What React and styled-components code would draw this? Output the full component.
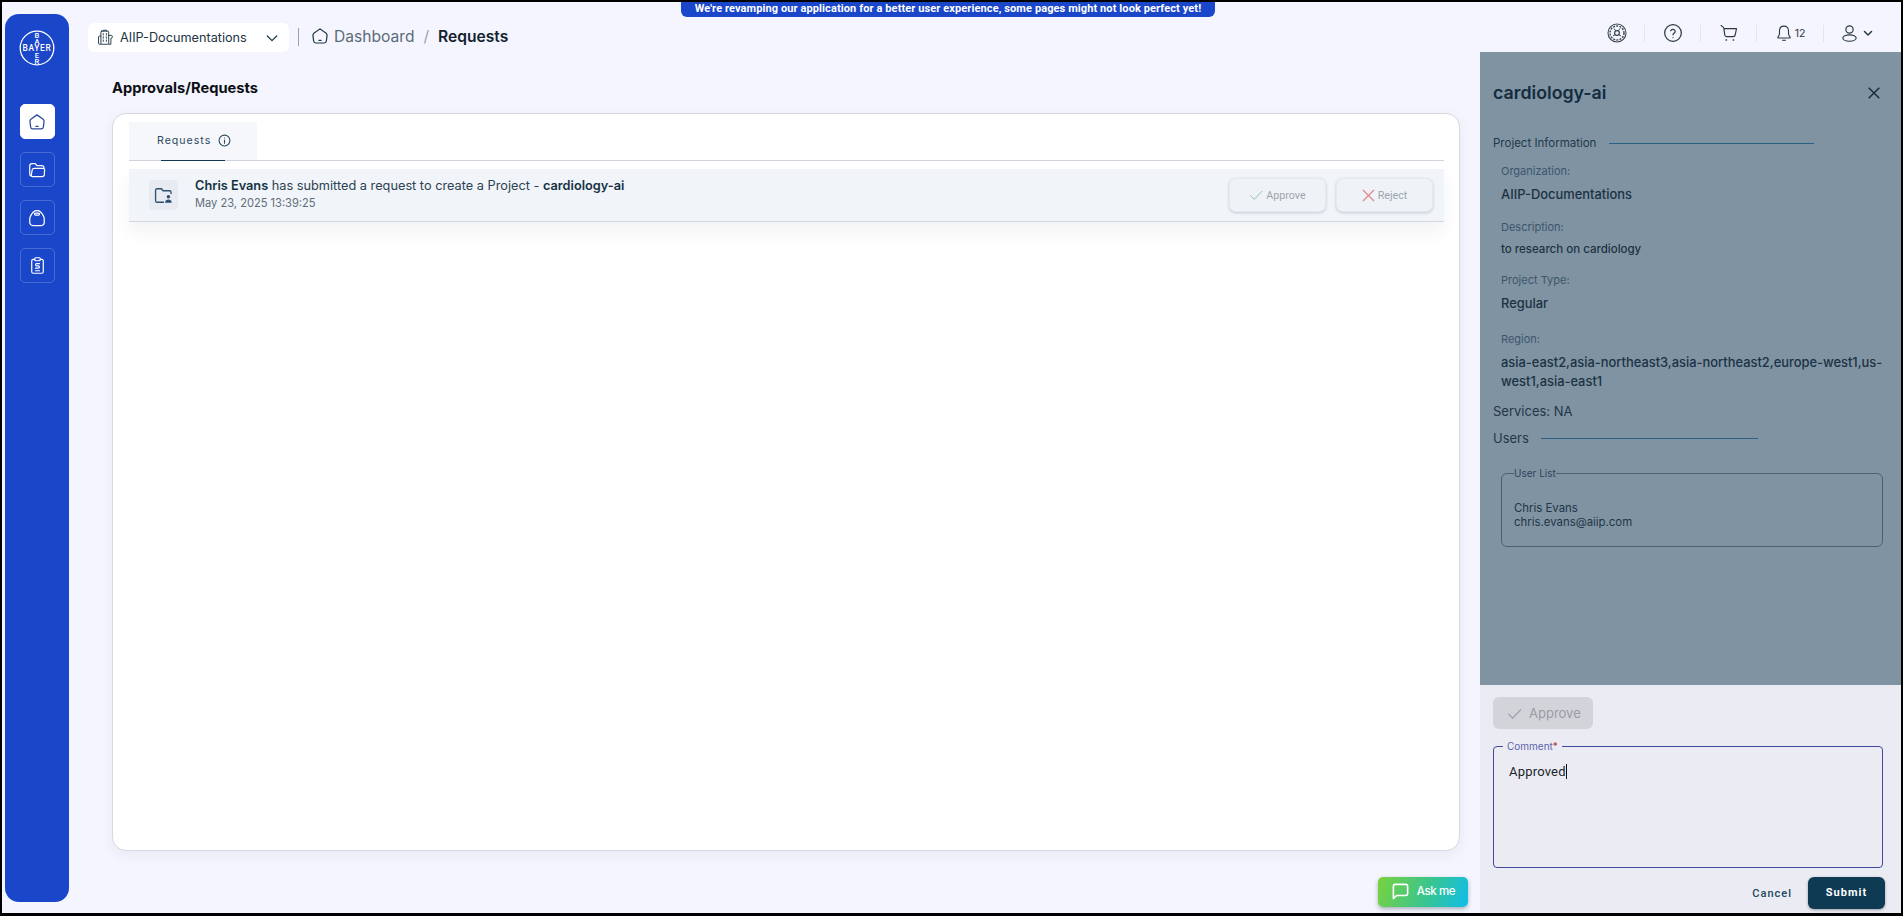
import React from "react";
import styled, { createGlobalStyle } from "styled-components";

const Global = createGlobalStyle`
  html, body { margin: 0; padding: 0; height: 100%; background: #000; overflow: hidden; }
  #root { height: 100%; }
  * { box-sizing: border-box; }
`;

const Frame = styled.div`
  position: relative;
  width: 1903px;
  height: 916px;
  border-style: solid;
  border-color: #000;
  border-width: 2px 2px 3px 2px;
  background: #f4f5fe;
  display: flex;
  font-family: Inter, "Liberation Sans", sans-serif;
  color: #10384f;
  overflow: hidden;
`;

const Banner = styled.div`
  position: absolute;
  top: 0;
  left: 679px;
  width: 534px;
  height: 15px;
  background: #1a46c9;
  border-radius: 0 0 6px 6px;
  color: #fff;
  font: 700 11px/13px Roboto, sans-serif;
  letter-spacing: 0.1px;
  text-align: center;
`;

const Sidebar = styled.aside`
  flex: none;
  width: 64px;
  margin: 12px 0 11px 3px;
  padding-top: 16px;
  background: #1a46c9;
  border-radius: 14px;
  display: flex;
  flex-direction: column;
  align-items: center;
`;

const Nav = styled.nav`
  margin-top: 38px;
  display: flex;
  flex-direction: column;
  gap: 13px;
`;

const NavButton = styled.div`
  width: 35px;
  height: 35px;
  border-radius: 5px;
  display: flex;
  align-items: center;
  justify-content: center;
  background: ${(p) => (p.$active ? "#fff" : "transparent")};
  border: 1px solid ${(p) => (p.$active ? "#fff" : "rgba(255,255,255,.2)")};
  color: ${(p) => (p.$active ? "#2c4a9a" : "#fff")};
`;

const Column = styled.div`
  flex: 1;
  min-width: 0;
  display: flex;
  flex-direction: column;
`;

const Header = styled.header`
  flex: none;
  height: 50px;
  display: flex;
  align-items: flex-start;
  padding-left: 19px;
`;

const OrgSelect = styled.div`
  width: 201px;
  height: 29px;
  margin-top: 21px;
  padding: 0 9px;
  background: #fff;
  border-radius: 6px;
  display: flex;
  align-items: center;
  font-size: 12.7px;
  color: #1d3444;
  gap: 6px;
  span { flex: 1; white-space: nowrap; }
`;

const VDivider = styled.div`
  width: 1px;
  height: 18px;
  margin: 26px 12px 0 9px;
  background: #9aa3ad;
`;

const Crumbs = styled.div`
  display: flex;
  align-items: center;
  height: 24px;
  margin-top: 22px;
  font-size: 15.6px;
  color: #5d6b77;
  svg { color: #1d3444; margin-right: 5px; }
`;

const CrumbSep = styled.span`
  margin: 0 9px;
  color: #9aa3ad;
`;

const CrumbNow = styled.span`
  color: #14232f;
  font-weight: 600;
`;

const Tools = styled.div`
  margin: 21px 0 0 auto;
  display: flex;
  align-items: center;
  height: 20px;
  padding-right: 19px;
  color: #2b3942;
`;

const Tool = styled.div`
  width: ${(p) => p.$w}px;
  padding-left: ${(p) => p.$pl || 0}px;
  display: flex;
  align-items: center;
  justify-content: center;
  gap: ${(p) => p.$gap || 2}px;
  font-size: 10.5px;
`;

const ToolBar = styled.div`
  width: 1px;
  height: 17px;
  background: #e3e5ee;
`;

const Body = styled.div`
  flex: 1;
  min-height: 0;
  display: flex;
`;

const Main = styled.main`
  position: relative;
  flex: 1;
  min-width: 0;
  padding: 26px 20px 0 43px;
`;

const PageTitle = styled.h1`
  margin: 0 0 15px;
  font-size: 14.7px;
  line-height: 20px;
  font-weight: 700;
  color: #0b0f14;
`;

const Card = styled.section`
  height: 738px;
  padding: 8px 15px 0 16px;
  background: #fff;
  border: 1px solid #d6d9e2;
  border-radius: 14px;
  box-shadow: 0 4px 14px rgba(40, 50, 90, 0.06);
`;

const TabBar = styled.div`
  height: 39px;
  border-bottom: 1px solid #cfd3dc;
`;

const Tab = styled.div`
  position: relative;
  width: 128px;
  height: 38px;
  background: #f5f7fb;
  display: flex;
  align-items: center;
  padding: 0 0 2px 28px;
  gap: 7px;
  font-size: 10.6px;
  letter-spacing: 1px;
  color: #2d4a5e;
  &::after {
    content: "";
    position: absolute;
    left: 32px;
    width: 64px;
    bottom: -1px;
    height: 1.5px;
    background: #10384f;
  }
`;

const Row = styled.div`
  height: 53px;
  margin-top: 8px;
  padding: 0 11px 0 20px;
  display: flex;
  align-items: center;
  background: #f1f4f8;
  border-bottom: 1px solid #d3d7df;
  box-shadow: 0 10px 16px rgba(40, 50, 70, 0.06);
`;

const RowIcon = styled.div`
  width: 29px;
  height: 30px;
  margin-right: 17px;
  border-radius: 4px;
  background: #e8ecf2;
  display: flex;
  align-items: center;
  justify-content: center;
  color: #2d5070;
`;

const RowText = styled.div`
  flex: 1;
  padding-bottom: 2px;
  font-size: 12.75px;
  line-height: 18px;
  color: #2c4353;
  b { font-weight: 600; color: #163346; }
`;

const RowDate = styled.div`
  font-size: 11.1px;
  line-height: 16px;
  color: #5f6d78;
`;

const RowButton = styled.div`
  width: 97px;
  height: 34px;
  margin-left: 10px;
  border-radius: 7px;
  background: #eff2f6;
  border: 1px solid #e6e9ee;
  box-shadow: 0 1px 3px rgba(30, 40, 60, 0.2);
  display: flex;
  align-items: center;
  justify-content: center;
  gap: 3px;
  font: 400 10.7px Roboto, sans-serif;
  color: #9ca6af;
`;

const AskMe = styled.div`
  position: absolute;
  right: 12px;
  bottom: 6px;
  width: 90px;
  height: 30px;
  border-radius: 5px;
  background: linear-gradient(110deg, #7ad23c 0%, #38c590 55%, #10bdea 100%);
  box-shadow: 0 2px 4px rgba(30, 50, 60, 0.35);
  display: flex;
  align-items: center;
  justify-content: center;
  gap: 7px;
  padding-bottom: 2px;
  color: #fff;
  font-size: 11.5px;
  letter-spacing: -0.4px;
  font-weight: 500;
`;

const Panel = styled.aside`
  flex: none;
  width: 421px;
  display: flex;
  flex-direction: column;
`;

const PanelTop = styled.div`
  flex: none;
  height: 633px;
  padding: 29px 12px 0 13px;
  background: #8093a2;
  color: #1b3244;
`;

const PanelHead = styled.div`
  display: flex;
  align-items: center;
  justify-content: space-between;
  padding-right: 9px;
`;

const PanelTitle = styled.h2`
  margin: 0;
  font-size: 17.8px;
  line-height: 24px;
  font-weight: 600;
  color: #132c3e;
`;

const Section = styled.div`
  display: flex;
  align-items: center;
  margin-top: ${(p) => p.$mt}px;
  font-size: ${(p) => p.$size}px;
  line-height: ${(p) => p.$lh}px;
  color: #21394b;
`;

const SectionLine = styled.div`
  width: ${(p) => p.$w}px;
  margin-left: ${(p) => p.$gap}px;
  height: 1px;
  background: #2c5f84;
`;

const Details = styled.div`
  padding-left: 8px;
`;

const Label = styled.div`
  margin-top: ${(p) => p.$mt}px;
  font-size: 11px;
  line-height: 16px;
  color: #3b566c;
`;

const Value = styled.div`
  margin-top: ${(p) => p.$mt || 6}px;
  font-size: ${(p) => p.$size || 12.9}px;
  line-height: ${(p) => p.$lh || 18}px;
  font-weight: 500;
  color: #1b3244;
`;

const Plain = styled.div`
  margin-top: ${(p) => p.$mt}px;
  font-size: 13px;
  line-height: 18px;
  color: #1f3648;
`;

const UserBox = styled.fieldset`
  margin: 20px 0 0 8px;
  width: 382px;
  height: 80px;
  padding: 22px 12px 0;
  border: 1px solid #4a6275;
  border-radius: 6px;
  font-size: 11.4px;
  line-height: 14px;
  color: #1f3648;
  legend {
    padding: 0;
    font-size: 10px;
    line-height: 12px;
    color: #2d465a;
  }
`;

const PanelBottom = styled.div`
  flex: 1;
  padding: 12px 12px 0 13px;
  background: #ebecf3;
`;

const ApproveChip = styled.div`
  width: 100px;
  height: 32px;
  border-radius: 6px;
  background: #d2d4da;
  display: flex;
  align-items: center;
  padding-left: 14px;
  gap: 7px;
  color: #989ca3;
  font-size: 13px;
`;

const CommentBox = styled.fieldset`
  margin: 11px 0 0;
  width: 390px;
  height: 128px;
  padding: 11px 15px 0;
  border: 1px solid #3f4a9c;
  border-radius: 4px;
  font-family: Roboto, sans-serif;
  font-size: 13px;
  letter-spacing: 0.2px;
  line-height: 18px;
  color: #20232a;
  legend {
    margin-left: -6px;
    padding: 0 4px;
    font: 400 10px/12px Inter, sans-serif;
    letter-spacing: 0;
    color: #5c63ad;
    i { font-style: normal; color: #b0323a; }
  }
`;

const Caret = styled.span`
  display: inline-block;
  width: 1px;
  height: 15px;
  background: #111;
  vertical-align: -3px;
`;

const Actions = styled.div`
  margin-top: 9px;
  width: 392px;
  display: flex;
  align-items: center;
  justify-content: flex-end;
`;

const CancelBtn = styled.div`
  margin-right: 16px;
  font: 500 11px Roboto, sans-serif;
  letter-spacing: 1px;
  color: #21465e;
`;

const SubmitBtn = styled.div`
  width: 77px;
  height: 32px;
  border-radius: 6px;
  background: #0f3a54;
  box-shadow: 0 1px 3px rgba(0, 0, 0, 0.35);
  color: #fff;
  font: 700 11px/32px Roboto, sans-serif;
  letter-spacing: 1px;
  text-align: center;
`;

const Ico = ({ s = 16, w = 1.4, children, vb = 24 }) => (
  <svg width={s} height={s} viewBox={`0 0 ${vb} ${vb}`} fill="none" stroke="currentColor" strokeWidth={w} strokeLinecap="round" strokeLinejoin="round">
    {children}
  </svg>
);

const HomeIcon = ({ s = 18, w = 1.7 }) => (
  <Ico s={s} w={w}>
    <path d="M12 2.5 20.2 8.4c.9.7 1.3 1.6 1.2 2.7l-.9 7.6c-.2 1.6-1.3 2.6-2.9 2.6H6.4c-1.6 0-2.7-1-2.9-2.6l-.9-7.6c-.1-1.1.3-2 1.2-2.7Z" />
    <path d="M10.5 17.8h3" />
  </Ico>
);

const Logo = () => (
  <svg width="36" height="36" viewBox="0 0 36 36" fill="none">
    <circle cx="18" cy="18" r="16.8" stroke="#fff" strokeWidth="1.3" />
    <g fill="#fff" fontFamily="Roboto, sans-serif" textAnchor="middle" fontWeight="500">
      <text x="18" y="21" fontSize="8.4" letterSpacing=".7">BAYER</text>
      <g fontSize="7.6">
        <text x="18" y="8">B</text>
        <text x="18" y="13.7">A</text>
        <text x="18" y="27.8">E</text>
        <text x="18" y="33.6">R</text>
      </g>
    </g>
  </svg>
);

const FolderIcon = () => (
  <Ico s={18} w={1.6}>
    <path d="M4.2 20.2c-1.1-.4-1.9-1.5-1.9-2.8V6.6c0-1.8 1.3-3 3-3h3.4c1 0 1.7.4 2.2 1.2l.9 1.4h6.6c1.7 0 2.8 1 2.8 2.7" />
    <path d="M6.4 20.8c-1.4 0-2.3-.9-2-2.2l1.2-6.7c.3-1.4 1.3-2.2 2.6-2.2h11.9c1.3 0 2.1 1 2 2.2l-.3 6.2c-.1 1.6-1.2 2.7-2.8 2.7Z" />
  </Ico>
);

const BagIcon = () => (
  <Ico s={20} w={1.5}>
    <path d="M8 4.5C9 3.4 10.4 3 12 3s3 .4 4 1.5c2.5 2.5 4.7 5.7 4.7 9v3.7c0 2.3-1.6 3.8-3.8 3.8H7.1c-2.2 0-3.8-1.5-3.8-3.8v-3.7c0-3.3 2.2-6.5 4.7-9Z" />
    <rect x="9" y="6" width="6" height="2.6" rx="1.3" />
  </Ico>
);

const ClipIcon = () => (
  <Ico s={19} w={1.5}>
    <path d="M8.5 4.2H6.6c-1.1 0-1.9.8-1.9 1.9v13.8c0 1.1.8 1.9 1.9 1.9h10.8c1.1 0 1.9-.8 1.9-1.9V6.1c0-1.1-.8-1.9-1.9-1.9h-1.9" />
    <rect x="8.5" y="2.2" width="7" height="3.8" rx="1.2" />
    <path d="M14.6 9.6H11c-.9 0-1.5.6-1.5 1.4s.6 1.4 1.5 1.4h2c.9 0 1.5.6 1.5 1.5s-.6 1.5-1.5 1.5H9.4" />
    <path d="M9.4 18.6h5.2" />
  </Ico>
);

const BuildingIcon = () => (
  <Ico s={17} w={1.3}>
    <rect x="5.5" y="3" width="11" height="18.5" rx="1" />
    <path d="M8.5 3V1.8h5V3M8.8 6.5v2M8.8 11v2M8.8 15.5v2M13.2 6.5v2M13.2 11v2M13.2 15.5v2" />
    <path d="M5.5 10H3.4c-.8 0-1.2.5-1.2 1.2v9c0 .8.4 1.3 1.2 1.3h2.1M16.5 9h3.8c.8 0 1.3.5 1.3 1.3v1.2c0 1-.6 1.6-1.6 1.6h-.4v8.4h-3.1" />
  </Ico>
);

const Chevron = ({ s = 16, w = 1.8 }) => (
  <Ico s={s} w={w}><path d="m5 9 7 7 7-7" /></Ico>
);

const TargetIcon = () => (
  <svg width="20" height="20" viewBox="0 0 20 20" fill="none" stroke="#3c4650">
    <circle cx="10" cy="10" r="9" strokeWidth="1.1" />
    <circle cx="10" cy="10" r="7" strokeWidth="1.4" strokeDasharray="2 1.2" />
    <circle cx="10" cy="10" r="2.4" strokeWidth="1.2" />
    <path d="M7 5.5 9 8M13 5.5 11 8M6 13l2.4-1.5M14 13l-2.4-1.5" strokeWidth="1" />
  </svg>
);

const HelpIcon = () => (
  <Ico s={20} w={1.5}>
    <circle cx="12" cy="12" r="10" />
    <path d="M9.3 9.3a2.8 2.8 0 0 1 5.4.9c0 1.8-2.7 2.4-2.7 4" />
    <path d="M12 17.4h.01" />
  </Ico>
);

const CartIcon = () => (
  <Ico s={20} w={1.4}>
    <path d="M2.5 3 5 5c.6.5.9 1.1.9 1.8H21l-1.6 7.6c-.3 1.2-1.1 1.9-2.3 1.9H9.2c-1.2 0-2.1-.8-2.3-2L5.9 6.8" />
    <path d="M8.5 20.5h.5M17 20.5h.5" strokeWidth="1.8" />
  </Ico>
);

const BellIcon = () => (
  <Ico s={18} w={1.5}>
    <path d="M12 2.8c-3.6 0-6 2.6-6 6.2v3.6c0 1.6-.7 3-1.9 4.5-.6.8-.2 1.6.8 1.6h14.2c1 0 1.4-.8.8-1.6-1.2-1.5-1.9-2.9-1.9-4.5V9c0-3.6-2.4-6.2-6-6.2Z" />
    <path d="M10 21.6h4" />
  </Ico>
);

const UserIcon = () => (
  <Ico s={19} w={1.5}>
    <circle cx="12" cy="7" r="4.6" />
    <ellipse cx="12" cy="17.8" rx="8.4" ry="4" />
  </Ico>
);

const InfoIcon = () => (
  <Ico s={13} w={2}>
    <circle cx="12" cy="12" r="10" />
    <path d="M12 11v6M12 7.4h.01" />
  </Ico>
);

const ProjectFolderIcon = () => (
  <Ico s={19} w={1.7}>
    <path d="M21.5 9.5V8c0-1.2-.8-2-2-2h-8l-2-2.5H4c-1.2 0-2 .8-2 2v13c0 1.2.8 2 2 2h8" />
    <circle cx="18.2" cy="13.6" r="2.2" fill="currentColor" stroke="none" />
    <path d="M14 21c.2-2.6 1.8-4 4.2-4s4 1.4 4.2 4Z" fill="currentColor" stroke="none" />
  </Ico>
);

const CheckIcon = ({ s, color }) => (
  <svg width={s} height={s} viewBox="0 0 16 16" fill="none" stroke={color} strokeWidth="1.1">
    <path d="M1.5 8.5 6 13 15 3.5" />
  </svg>
);

const CrossIcon = () => (
  <svg width="13" height="13" viewBox="0 0 13 13" fill="none" stroke="#e0878c" strokeWidth="1.2">
    <path d="M1 1l11 11M12 1 1 12" />
  </svg>
);

const CloseIcon = () => (
  <svg width="12" height="12" viewBox="0 0 12 12" fill="none" stroke="#14293a" strokeWidth="1.4">
    <path d="M.7.7l10.6 10.6M11.3.7.7 11.3" />
  </svg>
);

const ChatIcon = () => (
  <Ico s={19} w={2}>
    <path d="M3 21V5.5C3 4.1 4 3 5.5 3h13C20 3 21 4.1 21 5.5v9c0 1.4-1 2.5-2.5 2.5H7Z" />
  </Ico>
);

export default function App() {
  return (
    <>
      <Global />
      <Frame>
        <Banner>We're revamping our application for a better user experience, some pages might not look perfect yet!</Banner>
        <Sidebar>
          <Logo />
          <Nav>
            <NavButton $active><HomeIcon /></NavButton>
            <NavButton><FolderIcon /></NavButton>
            <NavButton><BagIcon /></NavButton>
            <NavButton><ClipIcon /></NavButton>
          </Nav>
        </Sidebar>
        <Column>
          <Header>
            <OrgSelect>
              <BuildingIcon />
              <span>AIIP-Documentations</span>
              <Chevron />
            </OrgSelect>
            <VDivider />
            <Crumbs>
              <HomeIcon s={18} w={1.6} />
              Dashboard
              <CrumbSep>/</CrumbSep>
              <CrumbNow>Requests</CrumbNow>
            </Crumbs>
            <Tools>
              <Tool $w={54}><TargetIcon /></Tool>
              <ToolBar />
              <Tool $w={55}><HelpIcon /></Tool>
              <ToolBar />
              <Tool $w={55}><CartIcon /></Tool>
              <ToolBar />
              <Tool $w={66}><BellIcon />12</Tool>
              <ToolBar />
              <Tool $w={58} $gap={3} $pl={8}><UserIcon /><Chevron s={12} w={3} /></Tool>
            </Tools>
          </Header>
          <Body>
            <Main>
              <PageTitle>Approvals/Requests</PageTitle>
              <Card>
                <TabBar>
                  <Tab>Requests <InfoIcon /></Tab>
                </TabBar>
                <Row>
                  <RowIcon><ProjectFolderIcon /></RowIcon>
                  <RowText>
                    <div><b>Chris Evans</b> has submitted a request to create a Project - <b>cardiology-ai</b></div>
                    <RowDate>May 23, 2025 13:39:25</RowDate>
                  </RowText>
                  <RowButton><CheckIcon s={14} color="#8fc2a0" />Approve</RowButton>
                  <RowButton><CrossIcon />Reject</RowButton>
                </Row>
              </Card>
              <AskMe><ChatIcon />Ask me</AskMe>
            </Main>
            <Panel>
              <PanelTop>
                <PanelHead>
                  <PanelTitle>cardiology-ai</PanelTitle>
                  <CloseIcon />
                </PanelHead>
                <Section $mt={30} $size={11.5} $lh={16}>
                  Project Information
                  <SectionLine $gap={13} $w={205} />
                </Section>
                <Details>
                  <Label $mt={12}>Organization:</Label>
                  <Value $mt={7}>AIIP-Documentations</Value>
                  <Label $mt={15}>Description:</Label>
                  <Value $size={11.5} $lh={16}>to research on cardiology</Value>
                  <Label $mt={15}>Project Type:</Label>
                  <Value $mt={7}>Regular</Value>
                  <Label $mt={18}>Region:</Label>
                  <Value $lh={19}>asia-east2,asia-northeast3,asia-northeast2,europe-west1,us-west1,asia-east1</Value>
                </Details>
                <Plain $mt={11}>Services: NA</Plain>
                <Section $mt={9} $size={13} $lh={18}>
                  Users
                  <SectionLine $gap={12} $w={217} />
                </Section>
                <UserBox>
                  <legend>User List</legend>
                  <div>Chris Evans</div>
                  <div>chris.evans@aiip.com</div>
                </UserBox>
              </PanelTop>
              <PanelBottom>
                <ApproveChip><CheckIcon s={15} color="#989ca3" />Approve</ApproveChip>
                <CommentBox>
                  <legend>Comment<i>*</i></legend>
                  Approved<Caret />
                </CommentBox>
                <Actions>
                  <CancelBtn>Cancel</CancelBtn>
                  <SubmitBtn>Submit</SubmitBtn>
                </Actions>
              </PanelBottom>
            </Panel>
          </Body>
        </Column>
      </Frame>
    </>
  );
}
